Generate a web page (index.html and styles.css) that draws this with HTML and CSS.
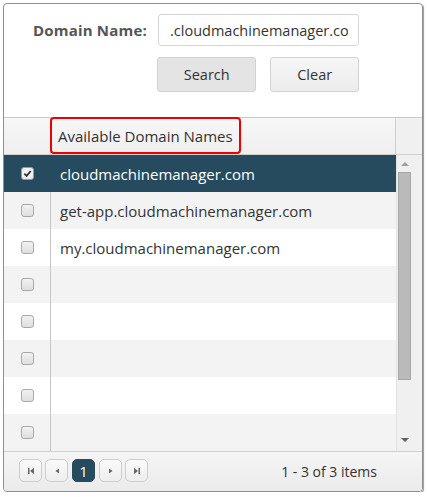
FILE: index.html
```
<!DOCTYPE html>
<html>
<head>
<meta charset="utf-8">
<link rel="stylesheet" href="styles.css">
</head>
<body>
<div class="box">
  <div class="form">
    <label class="lbl">Domain Name:</label>
    <div class="input"><span>.cloudmachinemanager.com</span></div>
    <div class="btns">
      <button class="btn btn-search">Search</button>
      <button class="btn btn-clear">Clear</button>
    </div>
  </div>
  <div class="grid">
    <div class="ghead">
      <div class="c-chk"></div>
      <div class="c-name"><span class="hl">Available Domain Names</span></div>
      <div class="c-sb"></div>
    </div>
    <div class="gbody">
      <div class="rows">
        <div class="row sel"><div class="c-chk"><span class="cb on"><svg viewBox="0 0 10 10" width="9" height="9"><path d="M1.5 5.2 L4 7.6 L8.6 2.2" fill="none" stroke="#333" stroke-width="2"/></svg></span></div><div class="c-name">cloudmachinemanager.com</div></div>
        <div class="row alt"><div class="c-chk"><span class="cb"></span></div><div class="c-name">get-app.cloudmachinemanager.com</div></div>
        <div class="row"><div class="c-chk"><span class="cb"></span></div><div class="c-name">my.cloudmachinemanager.com</div></div>
        <div class="row alt"><div class="c-chk"><span class="cb"></span></div><div class="c-name"></div></div>
        <div class="row"><div class="c-chk"><span class="cb"></span></div><div class="c-name"></div></div>
        <div class="row alt"><div class="c-chk"><span class="cb"></span></div><div class="c-name"></div></div>
        <div class="row"><div class="c-chk"><span class="cb"></span></div><div class="c-name"></div></div>
        <div class="row alt"><div class="c-chk"><span class="cb"></span></div><div class="c-name"></div></div>
      </div>
      <div class="sbar">
        <div class="arr up"></div>
        <div class="thumb"></div>
        <div class="sfill"></div>
        <div class="arr down"></div>
      </div>
    </div>
    <div class="pager">
      <div class="pbtns">
        <span class="pb"><svg viewBox="0 0 8 8" width="8" height="8"><rect x="1" y="1" width="1.5" height="6" fill="#666"/><path d="M7 1 L3 4 L7 7 Z" fill="#666"/></svg></span>
        <span class="pb"><svg viewBox="0 0 8 8" width="8" height="8"><path d="M6 1.5 L2.5 4 L6 6.5 Z" fill="#666"/></svg></span>
        <span class="pb cur">1</span>
        <span class="pb"><svg viewBox="0 0 8 8" width="8" height="8"><path d="M2 1.5 L5.5 4 L2 6.5 Z" fill="#666"/></svg></span>
        <span class="pb"><svg viewBox="0 0 8 8" width="8" height="8"><path d="M1 1 L5 4 L1 7 Z" fill="#666"/><rect x="5.5" y="1" width="1.5" height="6" fill="#666"/></svg></span>
      </div>
      <div class="info">1 - 3 of 3 items</div>
    </div>
  </div>
</div>
</body>
</html>
```

FILE: styles.css
```
html, body { margin: 0; padding: 0; background: #fff; }
body { font-family: "Open Sans", "Noto Sans", sans-serif; color: #333; }
.box {
  margin: 3px 0 0 3px;
  width: 418px;
  height: 487px;
  border: 1px solid #8f8f8f;
  border-radius: 4px;
  box-shadow: 1px 1px 1px #9a9a9a;
  overflow: hidden;
  display: flex;
  flex-direction: column;
}
.form {
  display: grid;
  grid-template-columns: 143px 201px;
  column-gap: 11px;
  row-gap: 11px;
  padding: 10px 0 25px 0;
}
.lbl {
  justify-self: end;
  align-self: center;
  font-weight: bold;
  font-size: 15px;
  letter-spacing: 0.2px;
  color: #555;
}
.input {
  box-sizing: border-box;
  height: 32px;
  border: 1px solid #d6d6d6;
  border-radius: 3px;
  padding: 0 10px 0 11px;
  display: flex;
  align-items: center;
  overflow: hidden;
  white-space: nowrap;
  font-size: 14.5px;
  color: #333;
}
.input span { display: block; overflow: hidden; }
.btns { grid-column: 2; display: flex; gap: 14px; margin-left: -1px; }
.btn {
  box-sizing: border-box;
  height: 35px;
  border: 1px solid #d2d2d2;
  border-radius: 3px;
  font-family: inherit;
  font-size: 14.5px;
  color: #333;
  padding: 0;
}
.btn-search { width: 101px; background: #e4e4e4; }
.btn-clear { width: 90px; background: linear-gradient(#f6f6f6, #ececec); }
.grid { flex: 1; display: flex; flex-direction: column; border-top: 1px solid #c9c9c9; }
.ghead { display: flex; height: 36px; background: linear-gradient(#f7f7f7, #efefef); border-bottom: 1px solid #cfcfcf; }
.c-chk { width: 46px; flex: none; border-right: 1px solid #c6c6c6; display: flex; align-items: center; justify-content: center; }
.ghead .c-chk { border-right: 0; }
.c-name { flex: 1; display: flex; align-items: center; padding-left: 9px; font-size: 15px; white-space: nowrap; }
.ghead .c-name { padding-left: 0; border-left: 1px solid #d0d0d0; }
.hl {
  box-sizing: border-box;
  height: 37px;
  margin-top: -1px;
  border: 2px solid #ee0000;
  border-radius: 4px;
  padding: 0 0 0 6px;
  width: 191px;
  margin-left: -1px;
  display: flex;
  align-items: center;
  color: #333;
}
.c-sb { width: 26px; flex: none; border-left: 1px solid #cfcfcf; background: #f0f0f0; }
.gbody { display: flex; height: 296px; }
.rows { flex: 1; }
.row { display: flex; height: 37px; background: #fff; }
.row.alt { background: #f3f3f3; }
.row.sel { background: #264b5e; color: #fff; }
.row.sel .c-chk { border-right-color: #264b5e; }
.cb {
  box-sizing: border-box;
  width: 13px; height: 13px;
  border: 1px solid #a9a9a9;
  border-radius: 3px;
  background: linear-gradient(#f2f2f2, #dedede);
  display: flex; align-items: center; justify-content: center;
}
.cb.on { background: #f0f0f0; border-color: #999; }
.sbar { width: 26px; flex: none; background: #f0f0f0; border-left: 1px solid #e3e3e3; box-sizing: border-box; display: flex; flex-direction: column; align-items: flex-start; }
.arr { width: 0; height: 0; border-left: 4px solid transparent; border-right: 4px solid transparent; margin-left: 4px; }
.arr.up { border-bottom: 4px solid #a0a0a0; margin-top: 7px; margin-bottom: 6px; }
.arr.down { border-top: 4px solid #606060; margin-bottom: 9px; }
.thumb { width: 13px; height: 208px; margin-left: 1px; background: #bababa; border: 1px solid #a8a8a8; box-sizing: border-box; }
.sfill { flex: 1; }
.pager {
  flex: 1;
  display: flex;
  align-items: center;
  justify-content: space-between;
  border-top: 1px solid #cfcfcf;
  background: linear-gradient(#f5f5f5, #ebebeb);
  padding: 0 45px 0 15px;
}
.pbtns { display: flex; gap: 3px; margin-top: -2px; }
.pb {
  box-sizing: border-box;
  width: 23px; height: 23px;
  border: 1px solid #cdcdcd;
  border-radius: 5px;
  background: linear-gradient(#fafafa, #eeeeee);
  display: flex; align-items: center; justify-content: center;
}
.pb.cur { background: #264b5e; border-color: #264b5e; color: #fff; font-size: 15px; margin: 0 1px; }
.info { font-size: 14px; color: #333; margin-top: -1px; }
```
